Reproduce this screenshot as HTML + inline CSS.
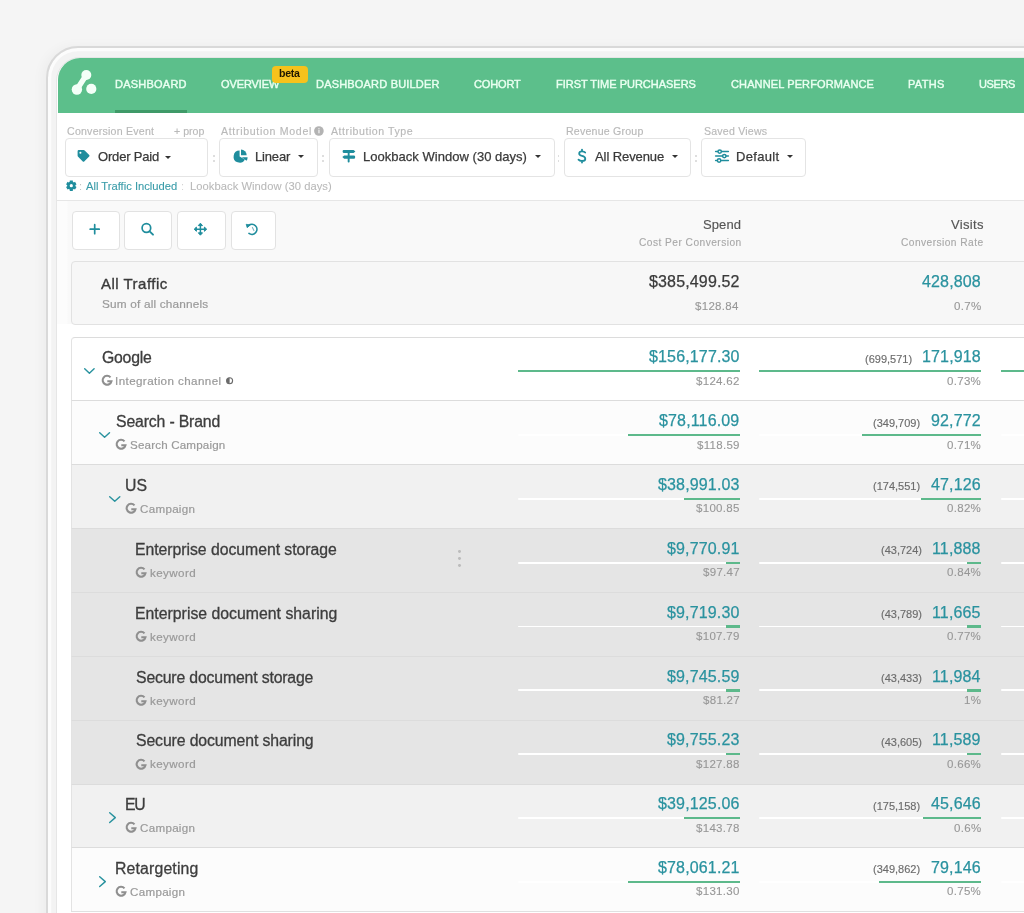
<!DOCTYPE html>
<html><head><meta charset="utf-8"><style>
html,body{margin:0;padding:0;}
body{width:1024px;height:913px;overflow:hidden;position:relative;background:#f5f5f5;font-family:"Liberation Sans",sans-serif;}
.t{position:absolute;white-space:nowrap;line-height:1;will-change:transform;}
#frame{position:absolute;left:45.9px;top:45.9px;width:1200px;height:1200px;border:2.1px solid #d9d9d9;border-radius:32px;background:#f3f3f3;box-shadow:inset 0 0 0 3.2px #fcfcfc, -4px 0 12px rgba(0,0,0,0.035);}
#app{position:absolute;left:0;top:0;width:1024px;height:913px;}
#nav{position:absolute;left:58px;top:58px;width:1100px;height:55px;background:#5cbf8b;border-top-left-radius:22px;}
#appbg{content:"";position:absolute;left:56px;top:57px;width:1100px;height:1000px;background:#fff;border:1px solid #e6e6e6;border-top-left-radius:24px;}
#navline{position:absolute;left:115px;top:110px;width:72px;height:3px;background:#3f9a68;}
#beta{position:absolute;left:272px;top:66px;width:36px;height:16.5px;background:#f6c21c;border-radius:4px;}
.info{position:absolute;left:314px;top:126.7px;width:9.5px;height:9.5px;border-radius:50%;background:#bdbdbd;}
.box{position:absolute;top:138.3px;height:38.5px;border:1px solid #e4e4e4;border-radius:4px;background:#fff;box-sizing:border-box;}
.colon{position:absolute;top:155px;width:1.5px;height:7px;background:linear-gradient(#dedede 0 2px,transparent 2px 5px,#dedede 5px);}
.caret{position:absolute;top:155.6px;width:0;height:0;border-left:3.3px solid transparent;border-right:3.3px solid transparent;border-top:3.8px solid #333;}
#sep{position:absolute;left:57px;top:200px;width:1000px;height:1px;background:#e6e6e6;}
#tblbg{position:absolute;left:57px;top:201px;width:1000px;height:123px;background:linear-gradient(90deg,#fcfcfc 0,#fcfcfc 10px,#f9f9f9 11px);}
.btn{position:absolute;top:210.5px;height:39px;box-sizing:border-box;border:1px solid #e2e2e2;border-radius:4px;background:#fff;}
#allcard{position:absolute;left:71px;top:260.5px;width:1000px;height:62.5px;border:1px solid #e2e2e2;border-radius:4px;background:#f7f7f7;}

#tbl{position:absolute;left:0;top:0;}
.row{position:absolute;left:71px;width:1000px;height:63px;border:1px solid #e3e3e3;border-top-color:#dcdcdc;border-bottom:none;}
.row.first{border-top-left-radius:4px;}
.gi{position:absolute;font-weight:bold;font-size:13.5px;line-height:12px;color:#9a9a9a;letter-spacing:0;}
.chev{position:absolute;}
.track{position:absolute;height:1.8px;background:#fff;border-radius:1px;}
.gbar{position:absolute;height:2.3px;background:#5db98b;}
.kebab{position:absolute;width:2.8px;height:2.8px;border-radius:50%;background:#bcbcbc;box-shadow:0 7px 0 #bcbcbc,0 14px 0 #bcbcbc;}

#tblbottom{position:absolute;left:71px;top:911px;width:1000px;height:1px;background:#e0e0e0;}

</style></head><body>
<div id="frame"></div>
<div id="app">
<div id="appbg"></div>
<div id="tblbg"></div>
<div id="nav"></div>
<div id="navline"></div>
<svg style="position:absolute;left:66px;top:64px" width="34" height="34" viewBox="66 64 34 34">
<line x1="86.3" y1="75" x2="76.9" y2="89.5" stroke="#f4fff8" stroke-width="5.4" stroke-linecap="round"/>
<circle cx="86.3" cy="75" r="5" fill="#f4fff8"/><circle cx="76.9" cy="89.5" r="5.2" fill="#f4fff8"/><circle cx="91.3" cy="88.9" r="5.1" fill="#f4fff8"/></svg>
<div class="t" style="left:115.40px;top:78.69px;font-size:11px;color:#eafff1;-webkit-text-stroke:0.42px #eafff1;letter-spacing:0.233px;">DASHBOARD</div>
<div class="t" style="left:221.00px;top:78.69px;font-size:11px;color:#eafff1;-webkit-text-stroke:0.42px #eafff1;letter-spacing:-0.101px;">OVERVIEW</div>
<div class="t" style="left:315.50px;top:78.69px;font-size:11px;color:#eafff1;-webkit-text-stroke:0.42px #eafff1;letter-spacing:0.189px;">DASHBOARD BUILDER</div>
<div class="t" style="left:474.00px;top:78.69px;font-size:11px;color:#eafff1;-webkit-text-stroke:0.42px #eafff1;letter-spacing:-0.149px;">COHORT</div>
<div class="t" style="left:556.00px;top:78.69px;font-size:11px;color:#eafff1;-webkit-text-stroke:0.42px #eafff1;letter-spacing:-0.011px;">FIRST TIME PURCHASERS</div>
<div class="t" style="left:731.00px;top:78.69px;font-size:11px;color:#eafff1;-webkit-text-stroke:0.42px #eafff1;letter-spacing:0.120px;">CHANNEL PERFORMANCE</div>
<div class="t" style="left:908.00px;top:78.69px;font-size:11px;color:#eafff1;-webkit-text-stroke:0.42px #eafff1;letter-spacing:0.324px;">PATHS</div>
<div class="t" style="left:979.00px;top:78.69px;font-size:11px;color:#eafff1;-webkit-text-stroke:0.42px #eafff1;letter-spacing:-0.390px;">USERS</div>
<div id="beta"></div>
<div class="t" style="left:279.30px;top:67.83px;font-size:10.6px;color:#1e1800;font-weight:bold;letter-spacing:-0.264px;">beta</div>
<div class="t" style="left:66.60px;top:125.83px;font-size:10.6px;color:#b9b9b9;-webkit-text-stroke:0.15px #b9b9b9;letter-spacing:0.228px;">Conversion Event</div>
<div class="t" style="left:174.00px;top:125.83px;font-size:10.6px;color:#b9b9b9;-webkit-text-stroke:0.15px #b9b9b9;">+ prop</div>
<div class="t" style="left:221.00px;top:126.23px;font-size:10.6px;color:#b9b9b9;-webkit-text-stroke:0.15px #b9b9b9;letter-spacing:0.679px;">Attribution Model</div>
<div class="t" style="left:330.70px;top:125.83px;font-size:10.6px;color:#b9b9b9;-webkit-text-stroke:0.15px #b9b9b9;letter-spacing:0.546px;">Attribution Type</div>
<div class="t" style="left:566.40px;top:125.83px;font-size:10.6px;color:#b9b9b9;-webkit-text-stroke:0.15px #b9b9b9;letter-spacing:0.208px;">Revenue Group</div>
<div class="t" style="left:704.20px;top:125.83px;font-size:10.6px;color:#b9b9b9;-webkit-text-stroke:0.15px #b9b9b9;letter-spacing:0.205px;">Saved Views</div>
<div class="box" style="left:65.2px;width:143.3px"></div>
<div class="box" style="left:219.3px;width:98.69999999999999px"></div>
<div class="box" style="left:329.2px;width:225.8px"></div>
<div class="box" style="left:564.4px;width:127.10000000000002px"></div>
<div class="box" style="left:701.2px;width:105.29999999999995px"></div>
<div class="colon" style="left:213px"></div>
<div class="colon" style="left:322.4px"></div>
<div class="colon" style="left:557.6px"></div>
<div class="colon" style="left:695px"></div>
<div class="t" style="left:98.00px;top:150.30px;font-size:13px;color:#3a3a3a;-webkit-text-stroke:0.25px #3a3a3a;letter-spacing:-0.181px;">Order Paid</div>
<div class="t" style="left:255.00px;top:150.30px;font-size:13px;color:#3a3a3a;-webkit-text-stroke:0.25px #3a3a3a;letter-spacing:-0.162px;">Linear</div>
<div class="t" style="left:363.40px;top:150.30px;font-size:13px;color:#3a3a3a;-webkit-text-stroke:0.25px #3a3a3a;letter-spacing:0.026px;">Lookback Window (30 days)</div>
<div class="t" style="left:595.00px;top:150.30px;font-size:13px;color:#3a3a3a;-webkit-text-stroke:0.25px #3a3a3a;letter-spacing:-0.087px;">All Revenue</div>
<div class="t" style="left:736.00px;top:150.30px;font-size:13px;color:#3a3a3a;-webkit-text-stroke:0.25px #3a3a3a;letter-spacing:0.337px;">Default</div>
<div class="caret" style="left:165.4px;top:156.2px"></div>
<div class="caret" style="left:297.6px;top:154.6px"></div>
<div class="caret" style="left:534.6px;top:155.0px"></div>
<div class="caret" style="left:672.1px;top:155.4px"></div>
<div class="caret" style="left:787px;top:155.4px"></div>
<div class="t" style="left:79.00px;top:180.99px;font-size:11px;color:#c4c4c4;">:</div>
<div class="t" style="left:85.70px;top:180.82px;font-size:11.2px;color:#3a9ca9;-webkit-text-stroke:0.1px #3a9ca9;">All Traffic Included</div>
<div class="t" style="left:180.50px;top:180.99px;font-size:11px;color:#d4d4d4;">:</div>
<div class="t" style="left:190.00px;top:180.82px;font-size:11.2px;color:#b9b9b9;-webkit-text-stroke:0.1px #b9b9b9;letter-spacing:0.050px;">Lookback Window (30 days)</div>
<div id="sep"></div>
<div class="btn" style="left:71.8px;width:48.2px"></div>
<div class="btn" style="left:124.3px;width:48.000000000000014px"></div>
<div class="btn" style="left:177.4px;width:48.599999999999994px"></div>
<div class="btn" style="left:230.5px;width:45.30000000000001px"></div>
<div class="t" style="left:702.50px;top:217.80px;font-size:13px;color:#555555;-webkit-text-stroke:0.15px #555555;letter-spacing:0.085px;">Spend</div>
<div class="t" style="left:638.60px;top:237.97px;font-size:10.2px;color:#a8a8a8;-webkit-text-stroke:0.12px #a8a8a8;letter-spacing:0.460px;">Cost Per Conversion</div>
<div class="t" style="left:950.90px;top:217.80px;font-size:13px;color:#555555;-webkit-text-stroke:0.15px #555555;letter-spacing:0.315px;">Visits</div>
<div class="t" style="left:901.40px;top:237.97px;font-size:10.2px;color:#a8a8a8;-webkit-text-stroke:0.12px #a8a8a8;letter-spacing:0.442px;">Conversion Rate</div>
<div id="allcard"></div>
<div class="t" style="left:101.40px;top:275.90px;font-size:15px;color:#3a3a3a;-webkit-text-stroke:0.35px #3a3a3a;letter-spacing:0.482px;">All Traffic</div>
<div class="t" style="left:101.60px;top:299.21px;font-size:11.8px;color:#9a9a9a;-webkit-text-stroke:0.2px #9a9a9a;letter-spacing:0.180px;">Sum of all channels</div>
<div class="t" style="left:648.62px;top:274.36px;font-size:16px;color:#3a3a3a;-webkit-text-stroke:0.25px #3a3a3a;letter-spacing:0.150px;">$385,499.52</div>
<div class="t" style="left:695.23px;top:300.87px;font-size:11.5px;color:#979797;-webkit-text-stroke:0.12px #979797;letter-spacing:0.300px;">$128.84</div>
<div class="t" style="left:921.96px;top:274.36px;font-size:16px;color:#2a929f;-webkit-text-stroke:0.25px #2a929f;letter-spacing:0.150px;">428,808</div>
<div class="t" style="left:953.91px;top:300.87px;font-size:11.5px;color:#979797;-webkit-text-stroke:0.12px #979797;letter-spacing:0.300px;">0.7%</div>
<svg style="position:absolute;left:74px;top:146px;overflow:visible" width="18" height="18" viewBox="74 146 18 18"><path d="M77.6 151.2 Q77.6 150 78.8 150 L83.6 150 Q84.2 150 84.7 150.5 L89.2 155.1 Q89.9 155.8 89.2 156.5 L84.2 161.5 Q83.5 162.2 82.8 161.5 L78.1 156.8 Q77.6 156.3 77.6 155.7 Z" fill="#1f8d9d"/><circle cx="80.4" cy="152.8" r="1.05" fill="#fff"/></svg>
<svg style="position:absolute;left:231px;top:147px;overflow:visible" width="19" height="18" viewBox="231 147 19 18"><path d="M239.6 156.6 L239.6 150.6 A6 6 0 1 0 244.9 159.4 Z" fill="#1f8d9d"/><path d="M241 155.2 L241 149.6 A5.7 5.7 0 0 1 246.7 155.2 Z" fill="#1f8d9d"/><path d="M241.8 157.2 L247.6 157.2 A5.9 5.9 0 0 1 246.5 160.8 Z" fill="#1f8d9d"/></svg>
<svg style="position:absolute;left:340px;top:147px;overflow:visible" width="18" height="18" viewBox="340 147 18 18"><rect x="347.7" y="151" width="1.9" height="11.6" rx="0.8" fill="#1f8d9d"/><path d="M342.6 151.3 Q342.6 149.9 343.6 149.9 L353.6 149.9 L355.4 151.4 L353.6 152.9 L343.6 152.9 Q342.6 152.9 342.6 151.3 Z" fill="#1f8d9d"/><path d="M355.2 157.1 Q355.2 155.6 354.2 155.6 L344.2 155.6 L342.3 157.1 L344.2 158.7 L354.2 158.7 Q355.2 158.7 355.2 157.1 Z" fill="#1f8d9d"/></svg>
<svg style="position:absolute;left:575px;top:147px;overflow:visible" width="14" height="18" viewBox="575 147 14 18"><path d="M585.2 152.6 Q584.3 151.3 582 151.3 Q579.2 151.3 579.2 153.5 Q579.2 155.3 582 155.9 Q585.3 156.6 585.3 159 Q585.3 161 582 161 Q579.6 161 578.5 159.6 M582 149.6 L582 151.3 M582 161 L582 162.5" fill="none" stroke="#1f8d9d" stroke-width="1.8" stroke-linecap="round"/></svg>
<svg style="position:absolute;left:713px;top:148px;overflow:visible" width="18" height="16" viewBox="713 148 18 16"><g stroke="#1f8d9d" stroke-width="1.5" stroke-linecap="round" fill="#fff"><line x1="715.6" y1="151.6" x2="728.4" y2="151.6"/><line x1="715.6" y1="156.1" x2="728.4" y2="156.1"/><line x1="715.6" y1="160.5" x2="728.4" y2="160.5"/><circle cx="719.7" cy="151.6" r="1.7"/><circle cx="724.3" cy="156.1" r="1.7"/><circle cx="719.1" cy="160.5" r="1.7"/></g></svg>
<svg style="position:absolute;left:64px;top:178px;overflow:visible" width="15" height="15" viewBox="64 178 15 15"><path d="M69.81 180.51 L72.79 180.51 L72.87 181.81 L73.89 182.39 L75.05 181.82 L76.54 184.39 L75.46 185.12 L75.46 186.28 L76.54 187.01 L75.05 189.58 L73.89 189.01 L72.87 189.59 L72.79 190.89 L69.81 190.89 L69.73 189.59 L68.71 189.01 L67.55 189.58 L66.06 187.01 L67.14 186.28 L67.14 185.12 L66.06 184.39 L67.55 181.82 L68.71 182.39 L69.73 181.81 Z M72.9 185.7 A1.6 1.6 0 1 0 69.7 185.7 A1.6 1.6 0 1 0 72.9 185.7 Z" fill="#1f8d9d" fill-rule="evenodd"/></svg>
<svg style="position:absolute;left:86px;top:220px;overflow:visible" width="18" height="18" viewBox="86 220 18 18"><path d="M90.2 229.2 L99.2 229.2 M94.7 224.7 L94.7 233.7" stroke="#1f8d9d" stroke-width="1.7" stroke-linecap="round"/></svg>
<svg style="position:absolute;left:138px;top:219px;overflow:visible" width="18" height="18" viewBox="138 219 18 18"><circle cx="146.4" cy="228" r="4.3" fill="none" stroke="#1f8d9d" stroke-width="1.7"/><path d="M149.6 231.3 L153 234.7" stroke="#1f8d9d" stroke-width="1.9" stroke-linecap="round"/></svg>
<svg style="position:absolute;left:191px;top:220px;overflow:visible" width="19" height="18" viewBox="191 220 19 18"><path d="M200.4 224.6 L200.4 233.8 M195.7 229.2 L205.1 229.2" stroke="#1f8d9d" stroke-width="1.5"/><path d="M198.3 225.6 L200.4 223.2 L202.5 225.6 Z M198.3 232.8 L200.4 235.2 L202.5 232.8 Z M196.4 227.1 L194.2 229.2 L196.4 231.3 Z M204.4 227.1 L206.7 229.2 L204.4 231.3 Z" fill="#1f8d9d" stroke="#1f8d9d" stroke-width="1" stroke-linejoin="round"/></svg>
<svg style="position:absolute;left:244px;top:219px;overflow:visible" width="18" height="18" viewBox="244 219 18 18"><path d="M248.6 225.6 A5 5 0 1 1 249 233.4" fill="none" stroke="#1f8d9d" stroke-width="1.7" stroke-linecap="round"/><path d="M246.2 224.3 L250.2 224.9 L247.2 227.7 Z" fill="#1f8d9d" stroke="#1f8d9d" stroke-width="0.8" stroke-linejoin="round"/><path d="M252.4 227.4 L253.9 230.6" stroke="#7fb5c0" stroke-width="1.1" stroke-linecap="round"/></svg>
<svg style="position:absolute;left:313px;top:126px;overflow:visible" width="12" height="12" viewBox="313 126 12 12"><circle cx="318.9" cy="131" r="4.8" fill="#b3b3b3"/><rect x="318.3" y="130" width="1.3" height="3.3" fill="#eee"/><circle cx="318.95" cy="128.7" r="0.75" fill="#eee"/></svg>
<div id="tbl">
<div class="row first" style="top:337px;height:62px;background:#ffffff"></div>
<div class="t" style="left:101.50px;top:350.33px;font-size:15.8px;color:#3d3d3d;-webkit-text-stroke:0.3px #3d3d3d;letter-spacing:-0.231px;">Google</div>
<svg style="position:absolute;left:99.5px;top:374.40000000000003px" width="14" height="14" viewBox="99.5 374.40000000000003 14 14"><path d="M110.00 377.80 A4.45 4.45 0 1 0 110.95 381.60 L106.80 381.60" fill="none" stroke="#8f8f8f" stroke-width="2.1"/></svg>
<div class="t" style="left:114.70px;top:375.28px;font-size:11.6px;color:#999999;-webkit-text-stroke:0.2px #999999;letter-spacing:0.414px;">Integration channel</div>
<svg class="chev" style="left:82.2px;top:366.40000000000003px" width="15" height="10" viewBox="82.2 366.40000000000003 15 10"><path d="M84.90 369.10 L89.60 373.60 L94.30 369.10" fill="none" stroke="#2a939f" stroke-width="1.45" stroke-linecap="round" stroke-linejoin="round"/></svg>
<div class="track" style="left:517.5px;top:370.20000000000005px;width:222.5px"></div>
<div class="gbar" style="left:517.5px;top:370.0px;width:222.5px"></div>
<div class="track" style="left:759.3px;top:370.20000000000005px;width:221.70000000000005px"></div>
<div class="gbar" style="left:759.3px;top:370.0px;width:221.70000000000005px"></div>
<div class="track" style="left:1001px;top:370.20000000000005px;width:99px"></div>
<div class="gbar" style="left:1001px;top:370.0px;width:99px"></div>
<div class="t" style="left:648.72px;top:349.26px;font-size:16px;color:#2a929f;-webkit-text-stroke:0.25px #2a929f;letter-spacing:0.150px;">$156,177.30</div>
<div class="t" style="left:696.23px;top:375.67px;font-size:11.5px;color:#979797;-webkit-text-stroke:0.12px #979797;letter-spacing:0.300px;">$124.62</div>
<div class="t" style="left:921.86px;top:349.26px;font-size:16px;color:#2a929f;-webkit-text-stroke:0.25px #2a929f;letter-spacing:0.150px;">171,918</div>
<div class="t" style="left:864.84px;top:353.69px;font-size:11px;color:#6c6c6c;-webkit-text-stroke:0.15px #6c6c6c;">(699,571)</div>
<div class="t" style="left:947.12px;top:375.67px;font-size:11.5px;color:#979797;-webkit-text-stroke:0.12px #979797;letter-spacing:0.300px;">0.73%</div>
<div class="row" style="top:400px;height:63px;background:#fcfcfc"></div>
<div class="t" style="left:116.20px;top:414.18px;font-size:15.8px;color:#3d3d3d;-webkit-text-stroke:0.3px #3d3d3d;letter-spacing:-0.151px;">Search - Brand</div>
<svg style="position:absolute;left:114.2px;top:438.25000000000006px" width="14" height="14" viewBox="114.2 438.25000000000006 14 14"><path d="M124.70 441.65 A4.45 4.45 0 1 0 125.65 445.45 L121.50 445.45" fill="none" stroke="#8f8f8f" stroke-width="2.1"/></svg>
<div class="t" style="left:130.40px;top:439.13px;font-size:11.6px;color:#999999;-webkit-text-stroke:0.2px #999999;letter-spacing:0.175px;">Search Campaign</div>
<svg class="chev" style="left:96.8px;top:430.25000000000006px" width="15" height="10" viewBox="96.8 430.25000000000006 15 10"><path d="M99.50 432.95 L104.40 437.45 L109.30 432.95" fill="none" stroke="#2a939f" stroke-width="1.45" stroke-linecap="round" stroke-linejoin="round"/></svg>
<div class="track" style="left:517.5px;top:434.05000000000007px;width:222.5px"></div>
<div class="gbar" style="left:628px;top:433.85px;width:112px"></div>
<div class="track" style="left:759.3px;top:434.05000000000007px;width:221.70000000000005px"></div>
<div class="gbar" style="left:861.5px;top:433.85px;width:119.5px"></div>
<div class="track" style="left:1001px;top:434.05000000000007px;width:99px"></div>
<div class="t" style="left:658.96px;top:413.11px;font-size:16px;color:#2a929f;-webkit-text-stroke:0.25px #2a929f;letter-spacing:0.150px;">$78,116.09</div>
<div class="t" style="left:697.08px;top:439.52px;font-size:11.5px;color:#979797;-webkit-text-stroke:0.12px #979797;letter-spacing:0.300px;">$118.59</div>
<div class="t" style="left:930.91px;top:413.11px;font-size:16px;color:#2a929f;-webkit-text-stroke:0.25px #2a929f;letter-spacing:0.150px;">92,772</div>
<div class="t" style="left:872.89px;top:417.54px;font-size:11px;color:#6c6c6c;-webkit-text-stroke:0.15px #6c6c6c;">(349,709)</div>
<div class="t" style="left:947.12px;top:439.52px;font-size:11.5px;color:#979797;-webkit-text-stroke:0.12px #979797;letter-spacing:0.300px;">0.71%</div>
<div class="row" style="top:464px;height:63px;background:#f1f1f1"></div>
<div class="t" style="left:124.60px;top:478.03px;font-size:15.8px;color:#3d3d3d;-webkit-text-stroke:0.3px #3d3d3d;letter-spacing:0.092px;">US</div>
<svg style="position:absolute;left:123.6px;top:502.1px" width="14" height="14" viewBox="123.6 502.1 14 14"><path d="M134.10 505.50 A4.45 4.45 0 1 0 135.05 509.30 L130.90 509.30" fill="none" stroke="#8f8f8f" stroke-width="2.1"/></svg>
<div class="t" style="left:139.80px;top:502.98px;font-size:11.6px;color:#999999;-webkit-text-stroke:0.2px #999999;letter-spacing:0.300px;">Campaign</div>
<svg class="chev" style="left:106.5px;top:494.1px" width="15" height="10" viewBox="106.5 494.1 15 10"><path d="M109.20 496.80 L114.25 501.30 L119.30 496.80" fill="none" stroke="#2a939f" stroke-width="1.45" stroke-linecap="round" stroke-linejoin="round"/></svg>
<div class="track" style="left:517.5px;top:497.90000000000003px;width:222.5px"></div>
<div class="gbar" style="left:684px;top:497.7px;width:56px"></div>
<div class="track" style="left:759.3px;top:497.90000000000003px;width:221.70000000000005px"></div>
<div class="gbar" style="left:920.5px;top:497.7px;width:60.5px"></div>
<div class="track" style="left:1001px;top:497.90000000000003px;width:99px"></div>
<div class="t" style="left:657.77px;top:476.96px;font-size:16px;color:#2a929f;-webkit-text-stroke:0.25px #2a929f;letter-spacing:0.150px;">$38,991.03</div>
<div class="t" style="left:696.23px;top:503.37px;font-size:11.5px;color:#979797;-webkit-text-stroke:0.12px #979797;letter-spacing:0.300px;">$100.85</div>
<div class="t" style="left:930.91px;top:476.96px;font-size:16px;color:#2a929f;-webkit-text-stroke:0.25px #2a929f;letter-spacing:0.150px;">47,126</div>
<div class="t" style="left:872.89px;top:481.39px;font-size:11px;color:#6c6c6c;-webkit-text-stroke:0.15px #6c6c6c;">(174,551)</div>
<div class="t" style="left:947.12px;top:503.37px;font-size:11.5px;color:#979797;-webkit-text-stroke:0.12px #979797;letter-spacing:0.300px;">0.82%</div>
<div class="row" style="top:528px;height:63px;background:#e5e5e5"></div>
<div class="t" style="left:134.80px;top:541.88px;font-size:15.8px;color:#3d3d3d;-webkit-text-stroke:0.3px #3d3d3d;letter-spacing:-0.040px;">Enterprise document storage</div>
<svg style="position:absolute;left:133.8px;top:565.95px" width="14" height="14" viewBox="133.8 565.95 14 14"><path d="M144.30 569.35 A4.45 4.45 0 1 0 145.25 573.15 L141.10 573.15" fill="none" stroke="#8f8f8f" stroke-width="2.1"/></svg>
<div class="t" style="left:150.00px;top:566.83px;font-size:11.6px;color:#999999;-webkit-text-stroke:0.2px #999999;letter-spacing:0.413px;">keyword</div>
<div class="track" style="left:517.5px;top:561.7500000000001px;width:222.5px"></div>
<div class="gbar" style="left:726px;top:561.5500000000001px;width:14px"></div>
<div class="track" style="left:759.3px;top:561.7500000000001px;width:221.70000000000005px"></div>
<div class="gbar" style="left:966.5px;top:561.5500000000001px;width:14.5px"></div>
<div class="track" style="left:1001px;top:561.7500000000001px;width:99px"></div>
<div class="t" style="left:666.82px;top:540.81px;font-size:16px;color:#2a929f;-webkit-text-stroke:0.25px #2a929f;letter-spacing:0.150px;">$9,770.91</div>
<div class="t" style="left:702.92px;top:567.22px;font-size:11.5px;color:#979797;-webkit-text-stroke:0.12px #979797;letter-spacing:0.300px;">$97.47</div>
<div class="t" style="left:932.10px;top:540.81px;font-size:16px;color:#2a929f;-webkit-text-stroke:0.25px #2a929f;letter-spacing:0.150px;">11,888</div>
<div class="t" style="left:881.19px;top:545.24px;font-size:11px;color:#6c6c6c;-webkit-text-stroke:0.15px #6c6c6c;">(43,724)</div>
<div class="t" style="left:947.12px;top:567.22px;font-size:11.5px;color:#979797;-webkit-text-stroke:0.12px #979797;letter-spacing:0.300px;">0.84%</div>
<div class="row" style="top:592px;height:63px;background:#e5e5e5"></div>
<div class="t" style="left:134.80px;top:605.73px;font-size:15.8px;color:#3d3d3d;-webkit-text-stroke:0.3px #3d3d3d;letter-spacing:0.013px;">Enterprise document sharing</div>
<svg style="position:absolute;left:133.8px;top:629.8px" width="14" height="14" viewBox="133.8 629.8 14 14"><path d="M144.30 633.20 A4.45 4.45 0 1 0 145.25 637.00 L141.10 637.00" fill="none" stroke="#8f8f8f" stroke-width="2.1"/></svg>
<div class="t" style="left:150.00px;top:630.68px;font-size:11.6px;color:#999999;-webkit-text-stroke:0.2px #999999;letter-spacing:0.413px;">keyword</div>
<div class="track" style="left:517.5px;top:625.6px;width:222.5px"></div>
<div class="gbar" style="left:726px;top:625.4px;width:14px"></div>
<div class="track" style="left:759.3px;top:625.6px;width:221.70000000000005px"></div>
<div class="gbar" style="left:966.5px;top:625.4px;width:14.5px"></div>
<div class="track" style="left:1001px;top:625.6px;width:99px"></div>
<div class="t" style="left:666.82px;top:604.66px;font-size:16px;color:#2a929f;-webkit-text-stroke:0.25px #2a929f;letter-spacing:0.150px;">$9,719.30</div>
<div class="t" style="left:696.23px;top:631.07px;font-size:11.5px;color:#979797;-webkit-text-stroke:0.12px #979797;letter-spacing:0.300px;">$107.79</div>
<div class="t" style="left:932.10px;top:604.66px;font-size:16px;color:#2a929f;-webkit-text-stroke:0.25px #2a929f;letter-spacing:0.150px;">11,665</div>
<div class="t" style="left:881.19px;top:609.09px;font-size:11px;color:#6c6c6c;-webkit-text-stroke:0.15px #6c6c6c;">(43,789)</div>
<div class="t" style="left:947.12px;top:631.07px;font-size:11.5px;color:#979797;-webkit-text-stroke:0.12px #979797;letter-spacing:0.300px;">0.77%</div>
<div class="row" style="top:656px;height:63px;background:#e5e5e5"></div>
<div class="t" style="left:135.80px;top:669.58px;font-size:15.8px;color:#3d3d3d;-webkit-text-stroke:0.3px #3d3d3d;letter-spacing:-0.159px;">Secure document storage</div>
<svg style="position:absolute;left:133.8px;top:693.65px" width="14" height="14" viewBox="133.8 693.65 14 14"><path d="M144.30 697.05 A4.45 4.45 0 1 0 145.25 700.85 L141.10 700.85" fill="none" stroke="#8f8f8f" stroke-width="2.1"/></svg>
<div class="t" style="left:150.00px;top:694.53px;font-size:11.6px;color:#999999;-webkit-text-stroke:0.2px #999999;letter-spacing:0.413px;">keyword</div>
<div class="track" style="left:517.5px;top:689.45px;width:222.5px"></div>
<div class="gbar" style="left:726px;top:689.25px;width:14px"></div>
<div class="track" style="left:759.3px;top:689.45px;width:221.70000000000005px"></div>
<div class="gbar" style="left:966.5px;top:689.25px;width:14.5px"></div>
<div class="track" style="left:1001px;top:689.45px;width:99px"></div>
<div class="t" style="left:666.82px;top:668.51px;font-size:16px;color:#2a929f;-webkit-text-stroke:0.25px #2a929f;letter-spacing:0.150px;">$9,745.59</div>
<div class="t" style="left:702.92px;top:694.92px;font-size:11.5px;color:#979797;-webkit-text-stroke:0.12px #979797;letter-spacing:0.300px;">$81.27</div>
<div class="t" style="left:932.10px;top:668.51px;font-size:16px;color:#2a929f;-webkit-text-stroke:0.25px #2a929f;letter-spacing:0.150px;">11,984</div>
<div class="t" style="left:881.19px;top:672.94px;font-size:11px;color:#6c6c6c;-webkit-text-stroke:0.15px #6c6c6c;">(43,433)</div>
<div class="t" style="left:964.00px;top:694.92px;font-size:11.5px;color:#979797;-webkit-text-stroke:0.12px #979797;letter-spacing:0.300px;">1%</div>
<div class="row" style="top:720px;height:63px;background:#e5e5e5"></div>
<div class="t" style="left:135.80px;top:733.43px;font-size:15.8px;color:#3d3d3d;-webkit-text-stroke:0.3px #3d3d3d;letter-spacing:-0.110px;">Secure document sharing</div>
<svg style="position:absolute;left:133.8px;top:757.5px" width="14" height="14" viewBox="133.8 757.5 14 14"><path d="M144.30 760.90 A4.45 4.45 0 1 0 145.25 764.70 L141.10 764.70" fill="none" stroke="#8f8f8f" stroke-width="2.1"/></svg>
<div class="t" style="left:150.00px;top:758.38px;font-size:11.6px;color:#999999;-webkit-text-stroke:0.2px #999999;letter-spacing:0.413px;">keyword</div>
<div class="track" style="left:517.5px;top:753.3000000000001px;width:222.5px"></div>
<div class="gbar" style="left:726px;top:753.1px;width:14px"></div>
<div class="track" style="left:759.3px;top:753.3000000000001px;width:221.70000000000005px"></div>
<div class="gbar" style="left:966.5px;top:753.1px;width:14.5px"></div>
<div class="track" style="left:1001px;top:753.3000000000001px;width:99px"></div>
<div class="t" style="left:666.82px;top:732.36px;font-size:16px;color:#2a929f;-webkit-text-stroke:0.25px #2a929f;letter-spacing:0.150px;">$9,755.23</div>
<div class="t" style="left:696.23px;top:758.77px;font-size:11.5px;color:#979797;-webkit-text-stroke:0.12px #979797;letter-spacing:0.300px;">$127.88</div>
<div class="t" style="left:932.10px;top:732.36px;font-size:16px;color:#2a929f;-webkit-text-stroke:0.25px #2a929f;letter-spacing:0.150px;">11,589</div>
<div class="t" style="left:881.19px;top:736.79px;font-size:11px;color:#6c6c6c;-webkit-text-stroke:0.15px #6c6c6c;">(43,605)</div>
<div class="t" style="left:947.12px;top:758.77px;font-size:11.5px;color:#979797;-webkit-text-stroke:0.12px #979797;letter-spacing:0.300px;">0.66%</div>
<div class="row" style="top:784px;height:62px;background:#f1f1f1"></div>
<div class="t" style="left:124.60px;top:797.28px;font-size:15.8px;color:#3d3d3d;-webkit-text-stroke:0.3px #3d3d3d;letter-spacing:-1.236px;">EU</div>
<svg style="position:absolute;left:123.6px;top:821.3499999999999px" width="14" height="14" viewBox="123.6 821.3499999999999 14 14"><path d="M134.10 824.75 A4.45 4.45 0 1 0 135.05 828.55 L130.90 828.55" fill="none" stroke="#8f8f8f" stroke-width="2.1"/></svg>
<div class="t" style="left:139.80px;top:822.23px;font-size:11.6px;color:#999999;-webkit-text-stroke:0.2px #999999;letter-spacing:0.300px;">Campaign</div>
<svg class="chev" style="left:106.8px;top:810.4499999999999px" width="12" height="16" viewBox="106.8 810.4499999999999 12 16"><path d="M109.50 813.15 L115.10 818.05 L109.50 822.95" fill="none" stroke="#2a939f" stroke-width="1.45" stroke-linecap="round" stroke-linejoin="round"/></svg>
<div class="track" style="left:517.5px;top:817.15px;width:222.5px"></div>
<div class="gbar" style="left:684px;top:816.9499999999999px;width:56px"></div>
<div class="track" style="left:759.3px;top:817.15px;width:221.70000000000005px"></div>
<div class="gbar" style="left:923px;top:816.9499999999999px;width:58px"></div>
<div class="track" style="left:1001px;top:817.15px;width:99px"></div>
<div class="t" style="left:657.77px;top:796.21px;font-size:16px;color:#2a929f;-webkit-text-stroke:0.25px #2a929f;letter-spacing:0.150px;">$39,125.06</div>
<div class="t" style="left:696.23px;top:822.62px;font-size:11.5px;color:#979797;-webkit-text-stroke:0.12px #979797;letter-spacing:0.300px;">$143.78</div>
<div class="t" style="left:930.91px;top:796.21px;font-size:16px;color:#2a929f;-webkit-text-stroke:0.25px #2a929f;letter-spacing:0.150px;">45,646</div>
<div class="t" style="left:872.89px;top:800.64px;font-size:11px;color:#6c6c6c;-webkit-text-stroke:0.15px #6c6c6c;">(175,158)</div>
<div class="t" style="left:953.81px;top:822.62px;font-size:11.5px;color:#979797;-webkit-text-stroke:0.12px #979797;letter-spacing:0.300px;">0.6%</div>
<div class="row" style="top:847px;height:63px;background:#fcfcfc"></div>
<div class="t" style="left:115.20px;top:861.13px;font-size:15.8px;color:#3d3d3d;-webkit-text-stroke:0.3px #3d3d3d;letter-spacing:0.162px;">Retargeting</div>
<svg style="position:absolute;left:114.2px;top:885.2px" width="14" height="14" viewBox="114.2 885.2 14 14"><path d="M124.70 888.60 A4.45 4.45 0 1 0 125.65 892.40 L121.50 892.40" fill="none" stroke="#8f8f8f" stroke-width="2.1"/></svg>
<div class="t" style="left:130.40px;top:886.08px;font-size:11.6px;color:#999999;-webkit-text-stroke:0.2px #999999;letter-spacing:0.300px;">Campaign</div>
<svg class="chev" style="left:96.6px;top:874.3000000000001px" width="12" height="16" viewBox="96.6 874.3000000000001 12 16"><path d="M99.30 877.00 L104.90 881.90 L99.30 886.80" fill="none" stroke="#2a939f" stroke-width="1.45" stroke-linecap="round" stroke-linejoin="round"/></svg>
<div class="track" style="left:517.5px;top:881.0000000000001px;width:222.5px"></div>
<div class="gbar" style="left:628px;top:880.8000000000001px;width:112px"></div>
<div class="track" style="left:759.3px;top:881.0000000000001px;width:221.70000000000005px"></div>
<div class="gbar" style="left:879px;top:880.8000000000001px;width:102px"></div>
<div class="track" style="left:1001px;top:881.0000000000001px;width:99px"></div>
<div class="t" style="left:657.77px;top:860.06px;font-size:16px;color:#2a929f;-webkit-text-stroke:0.25px #2a929f;letter-spacing:0.150px;">$78,061.21</div>
<div class="t" style="left:696.23px;top:886.47px;font-size:11.5px;color:#979797;-webkit-text-stroke:0.12px #979797;letter-spacing:0.300px;">$131.30</div>
<div class="t" style="left:930.91px;top:860.06px;font-size:16px;color:#2a929f;-webkit-text-stroke:0.25px #2a929f;letter-spacing:0.150px;">79,146</div>
<div class="t" style="left:872.89px;top:864.49px;font-size:11px;color:#6c6c6c;-webkit-text-stroke:0.15px #6c6c6c;">(349,862)</div>
<div class="t" style="left:947.12px;top:886.47px;font-size:11.5px;color:#979797;-webkit-text-stroke:0.12px #979797;letter-spacing:0.300px;">0.75%</div>
<div id="tblbottom"></div>
<svg style="position:absolute;left:225px;top:376px;overflow:visible" width="9" height="9" viewBox="225 376 9 9"><circle cx="229.6" cy="380.7" r="3" fill="#fff" stroke="#6a6a6a" stroke-width="1.1"/><path d="M229.6 377.7 A3 3 0 0 0 229.6 383.7 Z" fill="#6a6a6a"/></svg>
<div class="kebab" style="left:457.8px;top:550px"></div>
</div>
</div>
</body></html>
